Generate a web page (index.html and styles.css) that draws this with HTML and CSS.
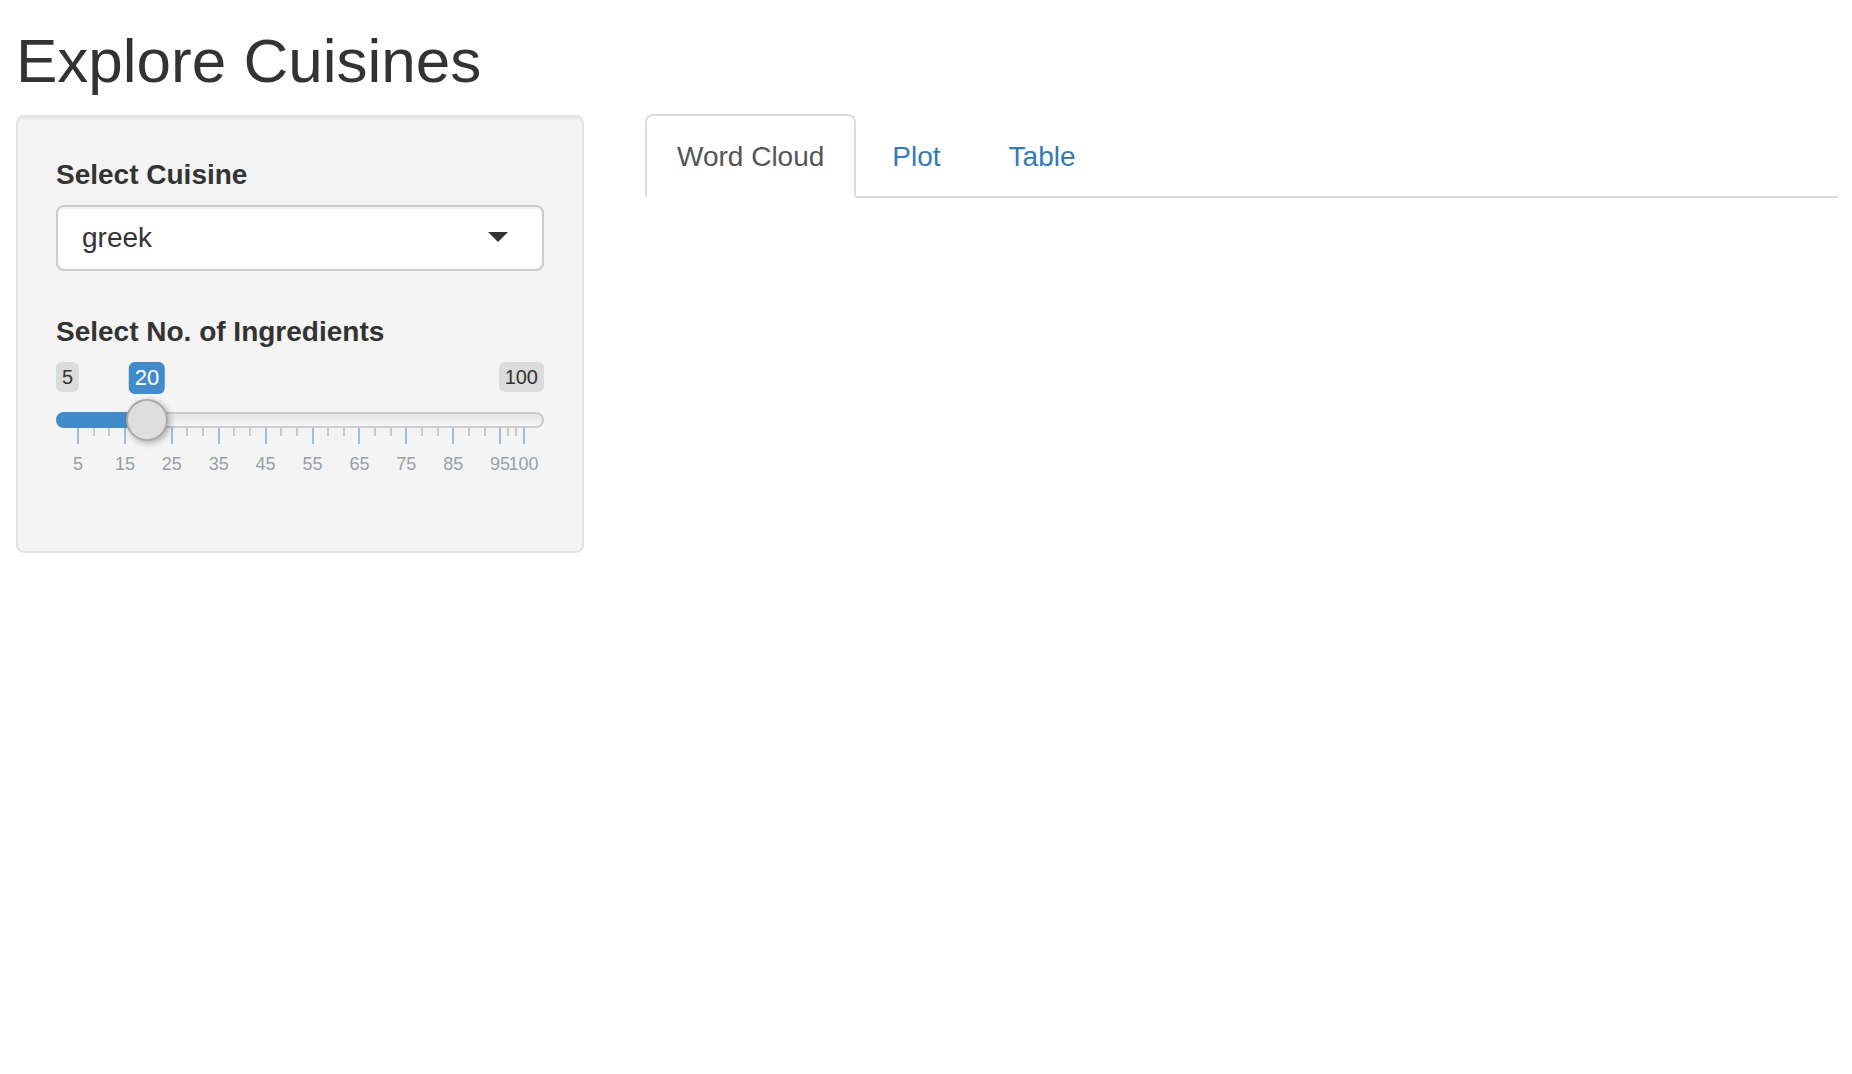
FILE: index.html
```html
<!DOCTYPE html>
<html lang="en">
<head>
<meta charset="utf-8">
<title>Explore Cuisines</title>
<link rel="stylesheet" href="styles.css">
</head>
<body>
<div class="page">
  <h1 class="title">Explore Cuisines</h1>
  <div class="layout">
    <aside class="well">
      <div class="field">
        <label class="field-label">Select Cuisine</label>
        <div class="select">
          <span class="select-value">greek</span>
          <span class="select-caret"></span>
        </div>
      </div>
      <div class="field field-slider">
        <label class="field-label">Select No. of Ingredients</label>
        <div class="irs">
          <span class="irs-min">5</span>
          <span class="irs-single" style="left:91px">20</span>
          <span class="irs-max">100</span>
          <span class="irs-line"></span>
          <span class="irs-bar" style="width:92px"></span>
          <span class="irs-handle" style="left:70px"></span>
          <div class="irs-grid">
            <span class="pol" style="left:22px"></span>
            <span class="pol small" style="left:37.6px"></span>
            <span class="pol small" style="left:53.3px"></span>
            <span class="pol" style="left:68.9px"></span>
            <span class="pol small" style="left:84.5px"></span>
            <span class="pol small" style="left:100.2px"></span>
            <span class="pol" style="left:115.8px"></span>
            <span class="pol small" style="left:131.4px"></span>
            <span class="pol small" style="left:147.1px"></span>
            <span class="pol" style="left:162.7px"></span>
            <span class="pol small" style="left:178.3px"></span>
            <span class="pol small" style="left:194px"></span>
            <span class="pol" style="left:209.6px"></span>
            <span class="pol small" style="left:225.2px"></span>
            <span class="pol small" style="left:240.9px"></span>
            <span class="pol" style="left:256.5px"></span>
            <span class="pol small" style="left:272.1px"></span>
            <span class="pol small" style="left:287.8px"></span>
            <span class="pol" style="left:303.4px"></span>
            <span class="pol small" style="left:319px"></span>
            <span class="pol small" style="left:334.7px"></span>
            <span class="pol" style="left:350.3px"></span>
            <span class="pol small" style="left:365.9px"></span>
            <span class="pol small" style="left:381.6px"></span>
            <span class="pol" style="left:397.2px"></span>
            <span class="pol small" style="left:412.8px"></span>
            <span class="pol small" style="left:428.5px"></span>
            <span class="pol" style="left:444.1px"></span>
            <span class="pol small" style="left:451.9px"></span>
            <span class="pol small" style="left:459.7px"></span>
            <span class="pol" style="left:467.5px"></span>

            <span class="grid-text" style="left:22px">5</span>
            <span class="grid-text" style="left:68.9px">15</span>
            <span class="grid-text" style="left:115.8px">25</span>
            <span class="grid-text" style="left:162.7px">35</span>
            <span class="grid-text" style="left:209.6px">45</span>
            <span class="grid-text" style="left:256.5px">55</span>
            <span class="grid-text" style="left:303.4px">65</span>
            <span class="grid-text" style="left:350.3px">75</span>
            <span class="grid-text" style="left:397.2px">85</span>
            <span class="grid-text" style="left:444.1px">95</span>
            <span class="grid-text" style="left:467.5px">100</span>
          </div>
        </div>
      </div>
    </aside>
    <main class="main">
      <ul class="tabs">
        <li class="tab active"><a class="tab-link">Word Cloud</a></li>
        <li class="tab"><a class="tab-link">Plot</a></li>
        <li class="tab"><a class="tab-link">Table</a></li>
      </ul>
    </main>
  </div>
</div>
</body>
</html>
```

FILE: styles.css
```css
html, body {
  margin: 0;
  padding: 0;
  background: #ffffff;
}

body {
  font-family: "Liberation Sans", Arial, Helvetica, sans-serif;
  color: #333333;
  font-size: 28px;
  line-height: 40px;
}

.page {
  padding: 0 14px 0 16px;
}

.title {
  margin: 28px 0 20px;
  font-size: 62px;
  line-height: 66px;
  font-weight: 400;
  color: #333333;
}

.layout {
  display: flex;
  align-items: flex-start;
  gap: 61px;
}

/* Sidebar well */
.well {
  box-sizing: border-box;
  width: 568px;
  flex: 0 0 568px;
  margin-top: 1px;
  padding: 38px 38px;
  background: #f4f4f4;
  border: 2px solid #e3e3e3;
  border-radius: 8px;
  box-shadow: inset 0 2px 2px rgba(0, 0, 0, 0.05);
}

.field {
  margin-bottom: 41px;
}

.field-slider {
  margin-bottom: 30px;
}

.field-label {
  display: block;
  font-weight: 700;
  font-size: 28px;
  line-height: 40px;
  margin-bottom: 10px;
  color: #333333;
}

/* Select box */
.select {
  box-sizing: border-box;
  height: 66px;
  display: flex;
  align-items: center;
  justify-content: space-between;
  padding: 0 34px 0 24px;
  background: #ffffff;
  border: 2px solid #cccccc;
  border-radius: 8px;
  box-shadow: inset 0 2px 2px rgba(0, 0, 0, 0.06);
}

.select-value {
  font-size: 28px;
  line-height: 40px;
  color: #333333;
}

.select-caret {
  width: 0;
  height: 0;
  border-left: 10px solid transparent;
  border-right: 10px solid transparent;
  border-top: 10px solid #333333;
  margin-top: -2px;
}

/* Range slider */
.irs {
  position: relative;
  height: 121px;
}

.irs-min,
.irs-max,
.irs-single {
  position: absolute;
  top: 0;
  padding: 2px 6px;
  border-radius: 6px;
  white-space: nowrap;
}

.irs-min,
.irs-max {
  font-size: 20px;
  line-height: 26px;
  color: #333333;
  background: rgba(0, 0, 0, 0.1);
}

.irs-min {
  left: 0;
}

.irs-max {
  right: 0;
}

.irs-single {
  font-size: 22px;
  line-height: 28px;
  color: #ffffff;
  background: #428bca;
  transform: translateX(-50%);
}

.irs-line {
  position: absolute;
  left: 0;
  right: 0;
  top: 50px;
  height: 16px;
  box-sizing: border-box;
  border: 2px solid #cccccc;
  border-radius: 16px;
  background: linear-gradient(to bottom, #dddddd -50%, #ffffff 150%);
}

.irs-bar {
  position: absolute;
  left: 0;
  top: 50px;
  height: 16px;
  background: #428bca;
  border-radius: 16px 0 0 16px;
}

.irs-handle {
  position: absolute;
  top: 37px;
  width: 42px;
  height: 42px;
  box-sizing: border-box;
  border: 2px solid #aaaaaa;
  border-radius: 50%;
  background: #dedede;
  box-shadow: 2px 2px 6px rgba(0, 0, 0, 0.3);
  z-index: 2;
}

.irs-grid {
  position: absolute;
  left: 0;
  right: 0;
  top: 66px;
  height: 50px;
}

.pol {
  position: absolute;
  top: 0;
  width: 2px;
  height: 16px;
  margin-left: -1px;
  background: #428bca;
  opacity: 0.5;
}

.pol.small {
  height: 8px;
  background: #999999;
}

.grid-text {
  position: absolute;
  top: 25px;
  font-size: 18px;
  line-height: 22px;
  color: #99a0a8;
  transform: translateX(-50%);
  white-space: nowrap;
}

/* Tabs */
.main {
  flex: 1 1 auto;
  min-width: 0;
}

.tabs {
  display: flex;
  list-style: none;
  margin: 0;
  padding: 0;
  border-bottom: 2px solid #dddddd;
}

.tab {
  margin-bottom: -2px;
  margin-right: 4px;
}

.tab-link {
  display: block;
  padding: 21px 30px 19px;
  font-size: 28px;
  line-height: 40px;
  color: #337ab7;
  border: 2px solid transparent;
  border-radius: 8px 8px 0 0;
  cursor: pointer;
}

.tab.active .tab-link {
  color: #555555;
  background: #ffffff;
  border-color: #dddddd #dddddd transparent;
}
```
